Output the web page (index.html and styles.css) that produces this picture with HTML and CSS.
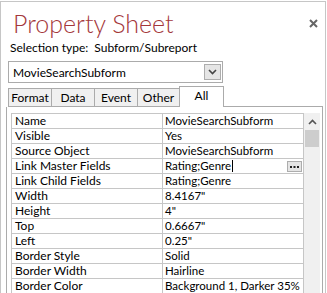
FILE: index.html
```html
<!DOCTYPE html>
<html lang="en">
  <head>
    <meta charset="UTF-8" />
    <title>Property Sheet</title>
    <link rel="stylesheet" href="styles.css">
  </head>
  <body>
    <div class="sheet">
      <div class="header">
        <h1 class="title">Property Sheet</h1>
        <span class="close">
          <svg width="9" height="9" viewBox="0 0 9 9"><path d="M1 1 L8 8 M8 1 L1 8" stroke="#666" stroke-width="2"/></svg>
        </span>
      </div>
      <div class="selection">Selection type:&nbsp;&nbsp;Subform/Subreport</div>

      <div class="combo">
        <span class="combo-text">MovieSearchSubform</span>
        <span class="combo-btn">
          <svg width="9" height="6" viewBox="0 0 9 6"><path d="M1 1 L4.5 4.5 L8 1" fill="none" stroke="#444" stroke-width="1.6"/></svg>
        </span>
      </div>

      <div class="tabs">
        <div class="tab">Format</div>
        <div class="tab">Data</div>
        <div class="tab">Event</div>
        <div class="tab">Other</div>
        <div class="tab active">All</div>
      </div>

      <div class="panel">
        <div class="props">
          <div class="row"><div class="name">Name</div><div class="value">MovieSearchSubform</div></div>
          <div class="row"><div class="name">Visible</div><div class="value">Yes</div></div>
          <div class="row"><div class="name">Source Object</div><div class="value">MovieSearchSubform</div></div>
          <div class="row">
            <div class="name">Link Master Fields</div>
            <div class="value editing">
              Rating;Genre<span class="caret"></span>
              <span class="build">
                <svg width="9" height="2" viewBox="0 0 9 2"><rect x="0" y="0" width="2" height="2" fill="#222"/><rect x="3.5" y="0" width="2" height="2" fill="#222"/><rect x="7" y="0" width="2" height="2" fill="#222"/></svg>
              </span>
            </div>
          </div>
          <div class="row"><div class="name">Link Child Fields</div><div class="value">Rating;Genre</div></div>
          <div class="row"><div class="name">Width</div><div class="value">8.4167"</div></div>
          <div class="row"><div class="name">Height</div><div class="value">4"</div></div>
          <div class="row"><div class="name">Top</div><div class="value">0.6667"</div></div>
          <div class="row"><div class="name">Left</div><div class="value">0.25"</div></div>
          <div class="row"><div class="name">Border Style</div><div class="value">Solid</div></div>
          <div class="row"><div class="name">Border Width</div><div class="value">Hairline</div></div>
          <div class="row"><div class="name">Border Color</div><div class="value">Background 1, Darker 35%</div></div>
        </div>
        <div class="scrollbar">
          <div class="arrow">
            <svg width="9" height="6" viewBox="0 0 9 6"><path d="M1 5 L4.5 1.5 L8 5" fill="none" stroke="#555" stroke-width="1.6"/></svg>
          </div>
          <div class="thumb"></div>
        </div>
      </div>
    </div>
  </body>
</html>
```

FILE: styles.css
```css
body {
  margin: 0;
  padding-top: 1px;
  font-family: Lato, "Noto Sans", sans-serif;
  font-size: 12px;
  color: #000;
  background: #fff;
  overflow: hidden;
  height: 292px;
}

.sheet {
  width: 324px;
  height: 291px;
  overflow: hidden;
  border: 1px solid #c6c6c6;
  border-bottom: none;
}

.header {
  display: flex;
  justify-content: space-between;
  align-items: flex-start;
  height: 38px;
}

.title {
  margin: 5px 0 0 12px;
  font-family: Lato, "Noto Sans", sans-serif;
  font-size: 25px;
  font-weight: 300;
  line-height: 32px;
  color: #a4373a;
}

.close {
  margin: 17px 7px 0 0;
  line-height: 0;
}

.selection {
  padding-left: 9px;
  line-height: 16px;
}

.combo {
  display: flex;
  align-items: center;
  justify-content: space-between;
  width: 213px;
  height: 20px;
  margin: 5px 0 0 7px;
  border: 1px solid #ababab;
}

.combo-text {
  padding-left: 4px;
}

.combo-btn {
  display: flex;
  align-items: center;
  justify-content: center;
  width: 15px;
  height: 14px;
  margin-right: 1px;
  border: 1px solid #adadad;
  background: #e5e5e5;
}

.tabs {
  display: flex;
  align-items: flex-end;
  width: 315px;
  height: 20px;
  margin: 3px 0 0 7px;
  border-bottom: 1px solid #ababab;
}

.tab {
  width: 42px;
  height: 17px;
  line-height: 18px;
  border: 1px solid #ababab;
  border-bottom: none;
  border-right: none;
  background: #f0f0f0;
  text-align: center;
}

.tab:nth-child(4) {
  width: 41px;
}

.tab.active {
  width: 43px;
  height: 20px;
  line-height: 17px;
  margin-bottom: -1px;
  background: #fff;
  border-right: 1px solid #ababab;
}

.panel {
  display: flex;
  align-items: flex-start;
  width: 311px;
  height: 200px;
  margin-left: 5px;
  padding: 6px 0 0 4px;
  border-left: 1px solid #ababab;
  border-right: 1px solid #ababab;
}

.props {
  width: 291px;
  border: 1px solid #c6c6c6;
  border-bottom: none;
}

.row {
  display: flex;
  height: 14px;
  border-bottom: 1px solid #c6c6c6;
  line-height: 14px;
}

.name {
  flex: none;
  width: 147px;
  padding-left: 3px;
  border-right: 1px solid #c6c6c6;
}

.value {
  flex: 1;
  min-width: 0;
  padding-left: 2px;
  font-size: 11.5px;
  white-space: nowrap;
  overflow: hidden;
}

.editing {
  display: flex;
  align-items: center;
}

.caret {
  width: 1px;
  height: 12px;
  margin-left: 1px;
  background: #000;
}

.build {
  display: flex;
  align-items: center;
  justify-content: center;
  width: 13px;
  height: 9px;
  margin: 1px 1px 0 auto;
  border: 1px solid #adadad;
  background: #e5e5e5;
}

.scrollbar {
  width: 16px;
  height: 190px;
  background: #f0f0f0;
}

.arrow {
  display: flex;
  justify-content: center;
  align-items: center;
  height: 17px;
}

.thumb {
  height: 17px;
  margin: 0 1px;
  background: #cdcdcd;
}
```
